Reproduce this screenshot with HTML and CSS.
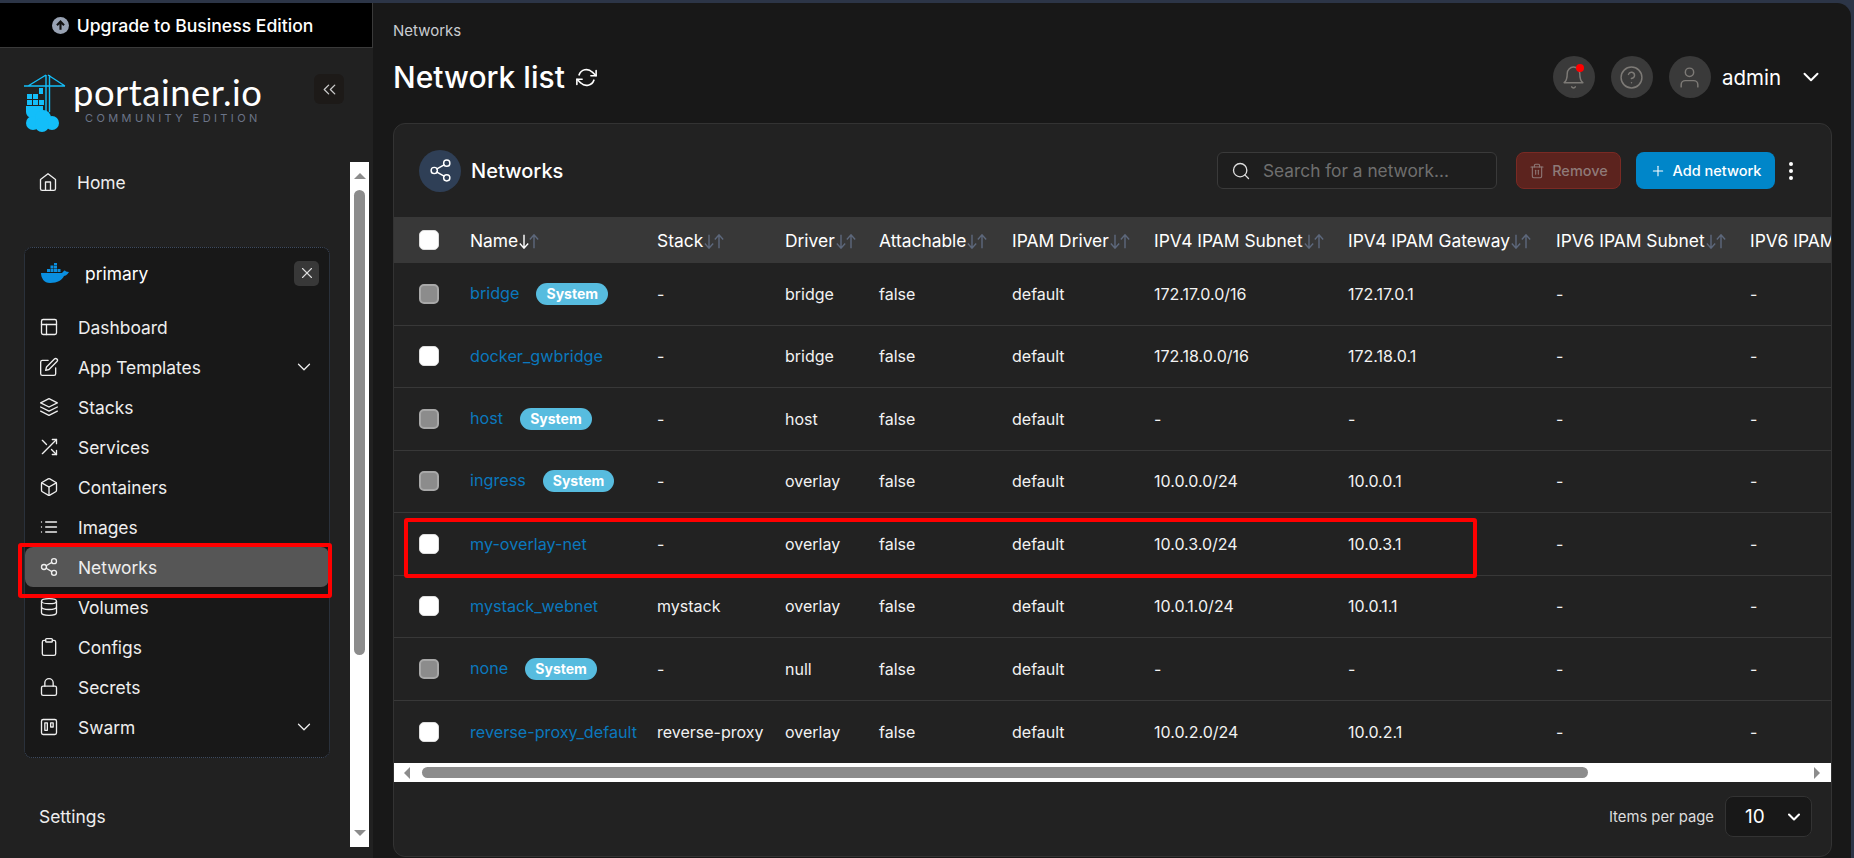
FILE: index.html
```html
<!DOCTYPE html>
<html lang="en">
<head>
  <meta charset="UTF-8" />
  <title>Networks | Portainer</title>
  <link rel="stylesheet" href="styles.css">
</head>
<body>

<!-- icon sprite -->
<svg class="sprite" xmlns="http://www.w3.org/2000/svg">
  <symbol id="i-home" viewBox="0 0 24 24"><path d="M3 9l9-7 9 7v11a2 2 0 0 1-2 2H5a2 2 0 0 1-2-2z"/><polyline points="9 22 9 12 15 12 15 22"/></symbol>
  <symbol id="i-layout" viewBox="0 0 24 24"><rect x="3" y="3" width="18" height="18" rx="2"/><line x1="3" y1="9" x2="21" y2="9"/><line x1="9" y1="21" x2="9" y2="9"/></symbol>
  <symbol id="i-edit" viewBox="0 0 24 24"><path d="M11 4H4a2 2 0 0 0-2 2v14a2 2 0 0 0 2 2h14a2 2 0 0 0 2-2v-7"/><path d="M18.5 2.5a2.121 2.121 0 0 1 3 3L12 15l-4 1 1-4 9.5-9.5z"/></symbol>
  <symbol id="i-layers" viewBox="0 0 24 24"><polygon points="12 2 2 7 12 12 22 7 12 2"/><polyline points="2 17 12 22 22 17"/><polyline points="2 12 12 17 22 12"/></symbol>
  <symbol id="i-shuffle" viewBox="0 0 24 24"><polyline points="16 3 21 3 21 8"/><line x1="4" y1="20" x2="21" y2="3"/><polyline points="21 16 21 21 16 21"/><line x1="15" y1="15" x2="21" y2="21"/><line x1="4" y1="4" x2="9" y2="9"/></symbol>
  <symbol id="i-box" viewBox="0 0 24 24"><path d="M21 16V8a2 2 0 0 0-1-1.73l-7-4a2 2 0 0 0-2 0l-7 4A2 2 0 0 0 3 8v8a2 2 0 0 0 1 1.73l7 4a2 2 0 0 0 2 0l7-4A2 2 0 0 0 21 16z"/><polyline points="3.27 6.96 12 12.01 20.73 6.96"/><line x1="12" y1="22.08" x2="12" y2="12"/></symbol>
  <symbol id="i-list" viewBox="0 0 24 24"><line x1="8" y1="6" x2="21" y2="6"/><line x1="8" y1="12" x2="21" y2="12"/><line x1="8" y1="18" x2="21" y2="18"/><line x1="3" y1="6" x2="3.01" y2="6"/><line x1="3" y1="12" x2="3.01" y2="12"/><line x1="3" y1="18" x2="3.01" y2="18"/></symbol>
  <symbol id="i-share" viewBox="0 0 24 24"><circle cx="18" cy="5" r="3"/><circle cx="6" cy="12" r="3"/><circle cx="18" cy="19" r="3"/><line x1="8.59" y1="13.51" x2="15.42" y2="17.49"/><line x1="15.41" y1="6.51" x2="8.59" y2="10.49"/></symbol>
  <symbol id="i-database" viewBox="0 0 24 24"><ellipse cx="12" cy="5" rx="9" ry="3"/><path d="M21 12c0 1.66-4 3-9 3s-9-1.34-9-3"/><path d="M3 5v14c0 1.66 4 3 9 3s9-1.34 9-3V5"/></symbol>
  <symbol id="i-clipboard" viewBox="0 0 24 24"><path d="M16 4h2a2 2 0 0 1 2 2v14a2 2 0 0 1-2 2H6a2 2 0 0 1-2-2V6a2 2 0 0 1 2-2h2"/><rect x="8" y="2" width="8" height="4" rx="1"/></symbol>
  <symbol id="i-lock" viewBox="0 0 24 24"><rect x="3" y="11" width="18" height="11" rx="2"/><path d="M7 11V7a5 5 0 0 1 10 0v4"/></symbol>
  <symbol id="i-trello" viewBox="0 0 24 24"><rect x="3" y="3" width="18" height="18" rx="2"/><rect x="7" y="7" width="3" height="9"/><rect x="14" y="7" width="3" height="5"/></symbol>
  <symbol id="i-chevron" viewBox="0 0 24 24"><polyline points="6 9 12 15 18 9"/></symbol>
  <symbol id="i-chevrons-left" viewBox="0 0 24 24"><polyline points="11 17 6 12 11 7"/><polyline points="18 17 13 12 18 7"/></symbol>
  <symbol id="i-x" viewBox="0 0 24 24"><line x1="18" y1="6" x2="6" y2="18"/><line x1="6" y1="6" x2="18" y2="18"/></symbol>
  <symbol id="i-search" viewBox="0 0 24 24"><circle cx="11" cy="11" r="8"/><line x1="21" y1="21" x2="16.65" y2="16.65"/></symbol>
  <symbol id="i-trash" viewBox="0 0 24 24"><polyline points="3 6 5 6 21 6"/><path d="M19 6v14a2 2 0 0 1-2 2H7a2 2 0 0 1-2-2V6m3 0V4a2 2 0 0 1 2-2h4a2 2 0 0 1 2 2v2"/><line x1="10" y1="11" x2="10" y2="17"/><line x1="14" y1="11" x2="14" y2="17"/></symbol>
  <symbol id="i-plus" viewBox="0 0 24 24"><line x1="12" y1="5" x2="12" y2="19"/><line x1="5" y1="12" x2="19" y2="12"/></symbol>
  <symbol id="i-bell" viewBox="0 0 24 24"><path d="M18 8A6 6 0 0 0 6 8c0 7-3 9-3 9h18s-3-2-3-9"/><path d="M13.73 21a2 2 0 0 1-3.46 0"/></symbol>
  <symbol id="i-help" viewBox="0 0 24 24"><circle cx="12" cy="12" r="10"/><path d="M9.09 9a3 3 0 0 1 5.83 1c0 2-3 3-3 3"/><line x1="12" y1="17" x2="12.01" y2="17"/></symbol>
  <symbol id="i-user" viewBox="0 0 24 24"><path d="M20 21v-2a4 4 0 0 0-4-4H8a4 4 0 0 0-4 4v2"/><circle cx="12" cy="7" r="4"/></symbol>
  <symbol id="i-refresh" viewBox="0 0 24 24"><polyline points="23 4 23 10 17 10"/><polyline points="1 20 1 14 7 14"/><path d="M3.51 9a9 9 0 0 1 14.85-3.36L23 10M1 14l4.64 4.36A9 9 0 0 0 20.49 15"/></symbol>
  <symbol id="i-down" viewBox="0 0 12 18"><path d="M6 1v16M1 11.500 6 17l5-5.500"/></symbol>
  <symbol id="i-up" viewBox="0 0 12 18"><path d="M6 17V1M1 6.500 6 1l5 5.500"/></symbol>
</svg>

<div class="app">

  <!-- Sidebar -->
  <aside class="sidebar">
    <div class="upgrade">
      <svg class="upgrade-icon" viewBox="0 0 24 24">
        <circle cx="12" cy="12" r="12" fill="#98a2b3"/>
        <path d="M12 18V7M7 11.5 12 6.5l5 5" fill="none" stroke="#111" stroke-width="3"/>
      </svg>
      Upgrade to Business Edition
    </div>

    <div class="brand">
      <svg class="brand-mark" viewBox="0 0 42 58">
        <g fill="none" stroke="#13bef9" stroke-width="1.4">
          <path d="M0 12H41M22 1V42M25.500 1V38M22 1 4 12M24 1 41 12"/>
        </g>
        <g fill="#13bef9">
          <rect x="3" y="20" width="5" height="5"/><rect x="9" y="20" width="5" height="5"/>
          <rect x="3" y="26" width="5" height="5"/><rect x="9" y="26" width="5" height="5"/><rect x="15" y="26" width="5" height="5"/>
          <rect x="15" y="14" width="4" height="6"/>
          <path d="M2 32H19V37A8 8 0 0 1 11 44H8A6 6 0 0 1 2 38Z"/>
          <circle cx="9" cy="49" r="7"/><circle cx="19" cy="44" r="8"/><circle cx="28" cy="49" r="7"/><circle cx="18" cy="51" r="7"/>
        </g>
      </svg>
      <div class="brand-text">
        <div class="brand-name">portainer.io</div>
        <div class="brand-sub">COMMUNITY EDITION</div>
      </div>
      <button class="collapse"><svg class="icon"><use href="#i-chevrons-left"/></svg></button>
    </div>

    <div class="nav-wrap">
      <nav class="nav">
        <a class="nav-item nav-home"><svg class="icon"><use href="#i-home"/></svg>Home</a>

        <div class="env">
          <div class="env-head">
            <svg class="docker" viewBox="0 0 28 20">
              <g fill="#0a8fe0">
                <rect x="6" y="6" width="3" height="3"/><rect x="9.500" y="6" width="3" height="3"/><rect x="13" y="6" width="3" height="3"/>
                <rect x="9.500" y="2.500" width="3" height="3"/><rect x="13" y="2.500" width="3" height="3"/><rect x="13" y="0" width="3" height="2"/>
                <rect x="16.500" y="6" width="3" height="3"/>
                <path d="M0 10H21C22 9 23 7 24 7.500C24.500 8 25 9 28 9C26 12 24 13 23 13C21 17 17 20 9 20C3 20 0 15 0 10Z"/>
              </g>
            </svg>
            <span class="env-name">primary</span>
            <button class="env-close"><svg class="icon"><use href="#i-x"/></svg></button>
          </div>
          <a class="nav-item"><svg class="icon"><use href="#i-layout"/></svg>Dashboard</a>
          <a class="nav-item"><svg class="icon"><use href="#i-edit"/></svg>App Templates<svg class="icon caret"><use href="#i-chevron"/></svg></a>
          <a class="nav-item"><svg class="icon"><use href="#i-layers"/></svg>Stacks</a>
          <a class="nav-item"><svg class="icon"><use href="#i-shuffle"/></svg>Services</a>
          <a class="nav-item"><svg class="icon"><use href="#i-box"/></svg>Containers</a>
          <a class="nav-item"><svg class="icon"><use href="#i-list"/></svg>Images</a>
          <a class="nav-item active"><svg class="icon"><use href="#i-share"/></svg>Networks</a>
          <a class="nav-item"><svg class="icon"><use href="#i-database"/></svg>Volumes</a>
          <a class="nav-item"><svg class="icon"><use href="#i-clipboard"/></svg>Configs</a>
          <a class="nav-item"><svg class="icon"><use href="#i-lock"/></svg>Secrets</a>
          <a class="nav-item"><svg class="icon"><use href="#i-trello"/></svg>Swarm<svg class="icon caret"><use href="#i-chevron"/></svg></a>
        </div>

        <a class="settings">Settings</a>
      </nav>

      <div class="vscroll">
        <span class="arrow-up"></span>
        <span class="vthumb"></span>
        <span class="arrow-down"></span>
      </div>
    </div>
  </aside>

  <!-- Main -->
  <main class="main">
    <div class="crumb">Networks</div>
    <div class="topbar">
      <h1>Network list</h1>
      <svg class="icon refresh"><use href="#i-refresh"/></svg>
      <div class="top-actions">
        <span class="round bell"><svg class="icon"><use href="#i-bell"/></svg></span>
        <span class="round"><svg class="icon"><use href="#i-help"/></svg></span>
        <span class="round"><svg class="icon"><use href="#i-user"/></svg></span>
        <span class="username">admin</span>
        <svg class="icon user-caret"><use href="#i-chevron"/></svg>
      </div>
    </div>

    <section class="card">
      <div class="card-head">
        <span class="card-icon"><svg class="icon"><use href="#i-share"/></svg></span>
        <h2>Networks</h2>
        <div class="search">
          <svg class="icon"><use href="#i-search"/></svg>
          <span>Search for a network...</span>
        </div>
        <button class="btn btn-remove"><svg class="icon"><use href="#i-trash"/></svg>Remove</button>
        <button class="btn btn-add"><svg class="icon"><use href="#i-plus"/></svg>Add network</button>
        <span class="kebab"><i></i><i></i><i></i></span>
      </div>

      <div class="table-wrap">
        <table>
          <colgroup>
            <col class="c-check"><col class="c-name"><col class="c-stack"><col class="c-driver"><col class="c-attach"><col class="c-ipam"><col class="c-v4s"><col class="c-v4g"><col class="c-v6s"><col class="c-v6g">
          </colgroup>
          <thead>
            <tr>
              <th><input type="checkbox" class="check"></th>
              <th>Name<span class="sort"><svg class="on"><use href="#i-down"/></svg><svg><use href="#i-up"/></svg></span></th>
              <th>Stack<span class="sort"><svg><use href="#i-down"/></svg><svg><use href="#i-up"/></svg></span></th>
              <th>Driver<span class="sort"><svg><use href="#i-down"/></svg><svg><use href="#i-up"/></svg></span></th>
              <th>Attachable<span class="sort"><svg><use href="#i-down"/></svg><svg><use href="#i-up"/></svg></span></th>
              <th>IPAM Driver<span class="sort"><svg><use href="#i-down"/></svg><svg><use href="#i-up"/></svg></span></th>
              <th>IPV4 IPAM Subnet<span class="sort"><svg><use href="#i-down"/></svg><svg><use href="#i-up"/></svg></span></th>
              <th>IPV4 IPAM Gateway<span class="sort"><svg><use href="#i-down"/></svg><svg><use href="#i-up"/></svg></span></th>
              <th>IPV6 IPAM Subnet<span class="sort"><svg><use href="#i-down"/></svg><svg><use href="#i-up"/></svg></span></th>
              <th>IPV6 IPAM Gateway</th>
            </tr>
          </thead>
          <tbody>
            <tr>
              <td><input type="checkbox" class="check" disabled></td>
              <td><a>bridge</a><span class="badge">System</span></td>
              <td>-</td><td>bridge</td><td>false</td><td>default</td><td>172.17.0.0/16</td><td>172.17.0.1</td><td>-</td><td>-</td>
            </tr>
            <tr>
              <td><input type="checkbox" class="check"></td>
              <td><a>docker_gwbridge</a></td>
              <td>-</td><td>bridge</td><td>false</td><td>default</td><td>172.18.0.0/16</td><td>172.18.0.1</td><td>-</td><td>-</td>
            </tr>
            <tr>
              <td><input type="checkbox" class="check" disabled></td>
              <td><a>host</a><span class="badge">System</span></td>
              <td>-</td><td>host</td><td>false</td><td>default</td><td>-</td><td>-</td><td>-</td><td>-</td>
            </tr>
            <tr>
              <td><input type="checkbox" class="check" disabled></td>
              <td><a>ingress</a><span class="badge">System</span></td>
              <td>-</td><td>overlay</td><td>false</td><td>default</td><td>10.0.0.0/24</td><td>10.0.0.1</td><td>-</td><td>-</td>
            </tr>
            <tr>
              <td><input type="checkbox" class="check"></td>
              <td><a>my-overlay-net</a></td>
              <td>-</td><td>overlay</td><td>false</td><td>default</td><td>10.0.3.0/24</td><td>10.0.3.1</td><td>-</td><td>-</td>
            </tr>
            <tr>
              <td><input type="checkbox" class="check"></td>
              <td><a>mystack_webnet</a></td>
              <td>mystack</td><td>overlay</td><td>false</td><td>default</td><td>10.0.1.0/24</td><td>10.0.1.1</td><td>-</td><td>-</td>
            </tr>
            <tr>
              <td><input type="checkbox" class="check" disabled></td>
              <td><a>none</a><span class="badge">System</span></td>
              <td>-</td><td>null</td><td>false</td><td>default</td><td>-</td><td>-</td><td>-</td><td>-</td>
            </tr>
            <tr>
              <td><input type="checkbox" class="check"></td>
              <td><a>reverse-proxy_default</a></td>
              <td>reverse-proxy</td><td>overlay</td><td>false</td><td>default</td><td>10.0.2.0/24</td><td>10.0.2.1</td><td>-</td><td>-</td>
            </tr>
          </tbody>
        </table>
      </div>

      <div class="hscroll">
        <span class="arrow-left"></span>
        <span class="hthumb"></span>
        <span class="arrow-right"></span>
      </div>

      <div class="card-foot">
        <span>Items per page</span>
        <div class="page-size">10<svg class="icon"><use href="#i-chevron"/></svg></div>
      </div>
    </section>
  </main>
</div>

<!-- red marks drawn over the screenshot -->
<div class="mark mark-nav"></div>
<div class="mark mark-row"></div>

</body>
</html>
```

FILE: styles.css
```css
* {
  box-sizing: border-box;
}
html, body {
  height: 100%;
}
body {
  margin: 0;
  overflow: hidden;
  position: relative;
  background: #2c3547;
  color: #fff;
  font-family: Inter, 'Noto Sans', sans-serif;
  font-size: 17.400px;
}
button {
  font-family: inherit;
  border: none;
  cursor: pointer;
}
.sprite {
  display: none;
}
.icon {
  width: 20px;
  height: 20px;
  flex: none;
  fill: none;
  stroke: currentColor;
  stroke-width: 2;
  stroke-linecap: round;
  stroke-linejoin: round;
}

.app {
  display: flex;
  height: 858px;
  padding: 3px 3px 0 0;
}

/* Sidebar */
.sidebar {
  width: 373px;
  flex: none;
  background: #212121;
  display: flex;
  flex-direction: column;
}
.upgrade {
  height: 45px;
  background: #000;
  border-bottom: 1px solid #3a3a3a;
  border-right: 1px solid #3a3a3a;
  display: flex;
  align-items: center;
  justify-content: center;
  gap: 8px;
  font-weight: 500;
  font-size: 17.600px;
  padding: 1px 7px 0 0;
}
.upgrade-icon {
  width: 17px;
  height: 17px;
}
.brand {
  height: 114px;
  display: flex;
  align-items: flex-start;
  padding: 26px 0 0 24px;
}
.brand-mark {
  width: 42px;
  height: 58px;
  flex: none;
}
.brand-text {
  margin-left: 7px;
  width: 242px;
}
.brand-name {
  font-family: Lato, sans-serif;
  font-size: 36.400px;
  line-height: 36px;
  letter-spacing: 0.5px;
}
.brand-sub {
  font-size: 11px;
  line-height: 12px;
  letter-spacing: 3.400px;
  color: #6b7488;
  margin: 2px 0 0 12px;
  white-space: nowrap;
}
.collapse {
  width: 30px;
  height: 30px;
  flex: none;
  margin-left: -1px;
  background: #1d1a18;
  color: #ccc;
  border-radius: 6px;
  padding: 0;
  display: flex;
  align-items: center;
  justify-content: center;
}
.collapse .icon {
  width: 21px;
  height: 21px;
  stroke-width: 1.500;
}

.nav-wrap {
  display: flex;
  height: 685px;
}
.nav {
  width: 350px;
  flex: none;
}
.nav-item {
  height: 40px;
  display: flex;
  align-items: center;
  gap: 19px;
  padding-left: 14px;
  color: #eee;
}
.nav-home {
  padding-left: 38px;
}
.nav-item .icon {
  stroke-width: 1.600;
}
.nav-item .caret {
  width: 22px;
  height: 22px;
  margin-left: auto;
  margin-right: 14px;
  stroke-width: 1.400;
}
.env {
  margin: 45px 0 0 24px;
  width: 306px;
  height: 511px;
  background: #181818;
  border: 1px dotted #3d4a5f;
  border-radius: 8px;
}
.env-head {
  height: 59px;
  display: flex;
  align-items: center;
  padding: 0 10px 9px 16px;
}
.docker {
  width: 28px;
  height: 20px;
  flex: none;
}
.env-name {
  margin-left: 16px;
}
.env-close {
  margin-left: auto;
  width: 25px;
  height: 25px;
  padding: 0;
  border-radius: 5px;
  background: #383838;
  color: #ddd;
  display: flex;
  align-items: center;
  justify-content: center;
}
.env-close .icon {
  width: 18px;
  height: 18px;
  stroke-width: 1.500;
}
.nav-item.active {
  background: #565656;
  border-radius: 8px;
}
.settings {
  display: block;
  margin: 39px 0 0 39px;
  line-height: 40px;
  color: #eee;
}
.vscroll {
  width: 19px;
  height: 685px;
  background: #fff;
  display: flex;
  flex-direction: column;
  align-items: center;
  position: relative;
}
.vthumb {
  width: 11px;
  height: 465px;
  margin-top: 28px;
  border-radius: 6px;
  background: #8c8c8c;
}
.arrow-up, .arrow-down {
  position: absolute;
  width: 0;
  height: 0;
  border-left: 6px solid transparent;
  border-right: 6px solid transparent;
}
.arrow-up {
  top: 11px;
  border-bottom: 6px solid #8c8c8c;
}
.arrow-down {
  bottom: 11px;
  border-top: 6px solid #8c8c8c;
}

/* Main */
.main {
  flex: 1;
  min-width: 0;
  background: #181818;
  border-radius: 0 14px 0 0;
  padding: 0 19px 0 20px;
}
.crumb {
  font-size: 15px;
  line-height: 18px;
  padding-top: 19px;
  color: #c9ccd1;
  box-sizing: content-box;
  height: 18px;
}
.topbar {
  display: flex;
  align-items: center;
  height: 42px;
  margin-top: 16px;
}
.topbar h1 {
  margin: 0;
  font-size: 30px;
  font-weight: 500;
}
.refresh {
  width: 21px;
  height: 21px;
  margin-left: 11px;
  stroke-width: 1.800;
}
.top-actions {
  margin-left: auto;
  display: flex;
  align-items: center;
  margin-right: 8px;
}
.round {
  width: 42px;
  height: 42px;
  border-radius: 50%;
  background: #3a3a3a;
  color: #7d7a76;
  display: flex;
  align-items: center;
  justify-content: center;
  margin-left: 16px;
  position: relative;
}
.round .icon {
  width: 25px;
  height: 25px;
  stroke-width: 1.400;
}
.bell::after {
  content: "";
  position: absolute;
  top: 8px;
  right: 11px;
  width: 8px;
  height: 8px;
  border-radius: 50%;
  background: #f00;
}
.username {
  margin-left: 11px;
  font-size: 20.500px;
  font-weight: 400;
}
.user-caret {
  margin-left: 17px;
  width: 26px;
  height: 26px;
  stroke-width: 1.800;
}

.card {
  margin-top: 25px;
  height: 734px;
  background: #222;
  border: 1px solid #333;
  border-radius: 12px;
  overflow: hidden;
  display: flex;
  flex-direction: column;
}
.card-head {
  height: 93px;
  flex: none;
  display: flex;
  align-items: center;
  padding: 0 0 0 25px;
}
.card-icon {
  width: 42px;
  height: 42px;
  border-radius: 50%;
  background: #2f3f56;
  display: flex;
  align-items: center;
  justify-content: center;
}
.card-icon .icon {
  width: 25px;
  height: 25px;
  stroke-width: 1.400;
}
.card-head h2 {
  margin: 0 0 0 10px;
  font-size: 20px;
  font-weight: 500;
}
.search {
  margin-left: auto;
  width: 280px;
  height: 37px;
  background: #1e1e1e;
  border: 1px solid #3a3a3a;
  border-radius: 6px;
  display: flex;
  align-items: center;
  gap: 12px;
  padding-left: 13px;
  color: #6f6f6f;
  font-size: 17.300px;
}
.search .icon {
  color: #ddd;
  stroke-width: 1.600;
}
.btn {
  height: 37px;
  padding: 0;
  border-radius: 8px;
  display: flex;
  align-items: center;
  justify-content: center;
  gap: 7px;
  font-size: 14.500px;
  font-weight: 500;
}
.btn .icon {
  width: 16px;
  height: 16px;
  stroke-width: 1.600;
}
.btn-remove {
  width: 105px;
  margin-left: 19px;
  background: #5c231e;
  border: 1px solid #7a2a24;
  color: #8f7a78;
}
.btn-add {
  width: 139px;
  margin-left: 15px;
  background: #0086c9;
  color: #fff;
}
.kebab {
  width: 4px;
  margin: 0 38px 0 14px;
  display: flex;
  flex-direction: column;
  gap: 3px;
}
.kebab i {
  width: 4px;
  height: 4px;
  border-radius: 50%;
  background: #fff;
}

.table-wrap {
  height: 546px;
  flex: none;
  overflow: hidden;
}
table {
  width: 1550px;
  table-layout: fixed;
  border-collapse: separate;
  border-spacing: 0;
  font-size: 16px;
}
.c-check { width: 76px; }
.c-name { width: 187px; }
.c-stack { width: 128px; }
.c-driver { width: 94px; }
.c-attach { width: 133px; }
.c-ipam { width: 142px; }
.c-v4s { width: 194px; }
.c-v4g { width: 208px; }
.c-v6s { width: 194px; }
.c-v6g { width: 194px; }
th {
  height: 46px;
  background: #383838;
  text-align: left;
  font-weight: 400;
  font-size: 17.400px;
  white-space: nowrap;
  padding: 0;
  overflow: hidden;
}
th:first-child, td:first-child {
  padding-left: 25px;
}
td {
  height: 62.500px;
  padding: 0;
  border-bottom: 1px solid #383838;
  white-space: nowrap;
  color: #f2f2f2;
}
td a {
  color: #0b78bd;
  font-size: 16.200px;
}
tbody tr:last-child td {
  border-bottom: none;
}
.check {
  appearance: none;
  display: block;
  margin: 0;
  width: 20px;
  height: 20px;
  border-radius: 5px;
  background: #fff;
  border: 1px solid #ddd;
}
.check:disabled {
  background: #8c8c8c;
  border: 2px solid #a8a8a8;
}
.badge {
  display: inline-block;
  margin-left: 17px;
  padding: 0 10px;
  height: 22px;
  line-height: 22px;
  border-radius: 11px;
  background: #57bcdf;
  color: #fff;
  font-size: 14px;
  font-weight: 700;
}
.sort {
  display: inline-flex;
  vertical-align: -2px;
  margin-left: 1px;
}
.sort svg {
  width: 10px;
  height: 15px;
  fill: none;
  stroke: #5d687c;
  stroke-width: 1.700;
}
.sort svg.on {
  stroke: #fff;
}

.hscroll {
  height: 19px;
  flex: none;
  background: #fff;
  position: relative;
  padding: 4px 0 0 28px;
}
.hthumb {
  display: block;
  width: 1166px;
  height: 11px;
  border-radius: 6px;
  background: #8c8c8c;
}
.arrow-left, .arrow-right {
  position: absolute;
  top: 4px;
  width: 0;
  height: 0;
  border-top: 6px solid transparent;
  border-bottom: 6px solid transparent;
}
.arrow-left {
  left: 10px;
  border-right: 6px solid #8c8c8c;
}
.arrow-right {
  right: 11px;
  border-left: 6px solid #8c8c8c;
}

.card-foot {
  flex: 1;
  display: flex;
  align-items: center;
  justify-content: flex-end;
  padding: 0 19px 5px 0;
  gap: 11px;
  font-size: 14.800px;
  color: #ddd;
}
.page-size {
  width: 87px;
  height: 41px;
  background: #181818;
  border: 1px solid #333;
  border-radius: 8px;
  display: flex;
  align-items: center;
  justify-content: space-between;
  padding: 0 7px 0 19px;
  font-size: 19px;
  color: #fff;
}
.page-size .icon {
  stroke-width: 2.500;
}

/* annotation marks */
.mark {
  position: absolute;
  border: 4px solid #f00;
  border-radius: 3px;
  pointer-events: none;
}
.mark-nav {
  left: 18px;
  top: 543px;
  width: 314px;
  height: 55px;
}
.mark-row {
  left: 404px;
  top: 518px;
  width: 1073px;
  height: 60px;
}
```
